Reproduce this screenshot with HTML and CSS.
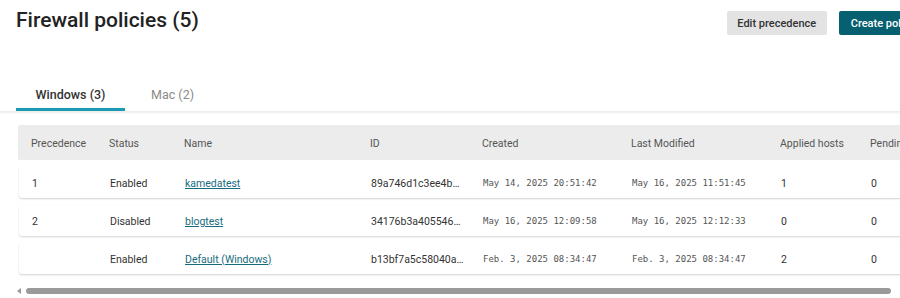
FILE: index.html
```html
<!DOCTYPE html>
<html lang="en">
<head>
    <meta charset="UTF-8">
    <meta name="viewport" content="width=device-width, initial-scale=1.0">
    <title>Firewall policies</title>
    <link rel="stylesheet" href="styles.css">
</head>
<body>
    <div class="page">
        <header class="page-header">
            <h1>Firewall policies (5)</h1>
            <div class="actions">
                <button class="btn btn-secondary">Edit precedence</button>
                <button class="btn btn-primary">Create policy</button>
            </div>
        </header>

        <nav class="tabs">
            <a class="tab active">Windows (3)</a>
            <a class="tab">Mac (2)</a>
        </nav>
    </div>

    <div class="table-scroll">
        <div class="table">
            <div class="row head">
                <div>Precedence</div>
                <div>Status</div>
                <div>Name</div>
                <div>ID</div>
                <div>Created</div>
                <div>Last Modified</div>
                <div>Applied hosts</div>
                <div>Pending</div>
            </div>
            <div class="row">
                <div>1</div>
                <div>Enabled</div>
                <div><a class="link">kamedatest</a></div>
                <div class="id">89a746d1c3ee4b0f9a2c</div>
                <div class="mono">May 14, 2025 20:51:42</div>
                <div class="mono">May 16, 2025 11:51:45</div>
                <div>1</div>
                <div>0</div>
            </div>
            <div class="row">
                <div>2</div>
                <div>Disabled</div>
                <div><a class="link">blogtest</a></div>
                <div class="id">34176b3a4055468e2d1f</div>
                <div class="mono">May 16, 2025 12:09:58</div>
                <div class="mono">May 16, 2025 12:12:33</div>
                <div>0</div>
                <div>0</div>
            </div>
            <div class="row">
                <div></div>
                <div>Enabled</div>
                <div><a class="link">Default (Windows)</a></div>
                <div class="id">b13bf7a5c58040a7e61c</div>
                <div class="mono">Feb. 3, 2025 08:34:47</div>
                <div class="mono">Feb. 3, 2025 08:34:47</div>
                <div>2</div>
                <div>0</div>
            </div>
        </div>
    </div>

    <div class="scrollbar">
        <span class="arrow"></span>
        <span class="thumb"></span>
    </div>
</body>
</html>
```

FILE: styles.css
```css
body {
    font-family: 'Roboto', 'Liberation Sans', sans-serif;
    margin: 0;
    padding: 0;
    color: #333;
    background-color: #fff;
    overflow: hidden;
}
.page {
    width: 100%;
}
.page-header {
    display: flex;
    align-items: flex-start;
    width: 927px;
    padding: 0 0 0 16px;
    box-sizing: border-box;
}
h1 {
    margin: 8px 0 0;
    font-size: 21px;
    font-weight: 500;
    color: #222;
}
.actions {
    margin-left: auto;
    margin-top: 11px;
    display: flex;
    gap: 12px;
}
.btn {
    font-family: inherit;
    font-size: 11px;
    font-weight: 500;
    height: 24px;
    padding: 0 12px;
    border: none;
    border-radius: 2px;
    white-space: nowrap;
}
.btn-secondary {
    background-color: #e3e3e3;
    color: #333;
    width: 100px;
    padding: 0;
}
.btn-primary {
    background-color: #07606f;
    color: #fff;
}
.tabs {
    display: flex;
    margin-top: 45px;
    padding-left: 16px;
    box-shadow: 0 2px 2px rgba(0, 0, 0, 0.08);
}
.tab {
    font-size: 12.5px;
    color: #8a8a8a;
    padding: 7px 0 6px;
    text-align: center;
}
.tab.active {
    width: 109px;
    color: #333;
    font-weight: 500;
    border-bottom: 3px solid #1b9ab3;
}
.tab + .tab {
    margin-left: 26px;
}
.table-scroll {
    margin: 14px 0 0 18px;
    overflow: hidden;
}
.table {
    width: 960px;
    display: flex;
    flex-direction: column;
    gap: 7px;
    padding-bottom: 3px;
}
.row {
    display: grid;
    grid-template-columns: 78px 75px 186px 112px 149px 149px 90px 90px;
    align-items: center;
    height: 31px;
    padding: 1px 0 0 13px;
    box-sizing: border-box;
    font-size: 10.5px;
    background: #fff;
    border-radius: 3px;
    box-shadow: 0 1px 2px rgba(0, 0, 0, 0.18);
    margin-left: 1px;
}
.row > div {
    white-space: nowrap;
    overflow: hidden;
    text-overflow: ellipsis;
    padding-right: 8px;
}
.row.head {
    height: 35px;
    margin-left: 0;
    background: #ececec;
    color: #555;
    border-radius: 2px;
    box-shadow: none;
    padding-top: 2px;
}
.row .id {
    padding-right: 18px;
}
.link {
    color: #176b7e;
    text-decoration: underline;
}
.mono {
    font-family: 'DejaVu Sans Mono', monospace;
    font-size: 9px;
    color: #555;
}
.scrollbar {
    display: flex;
    align-items: center;
    gap: 5px;
    margin: 11px 9px 0 17px;
}
.arrow {
    width: 0;
    height: 0;
    border-top: 3px solid transparent;
    border-bottom: 3px solid transparent;
    border-right: 4px solid #999;
}
.thumb {
    flex: 1;
    height: 6px;
    border-radius: 3px;
    background: #9a9a9a;
}
```
